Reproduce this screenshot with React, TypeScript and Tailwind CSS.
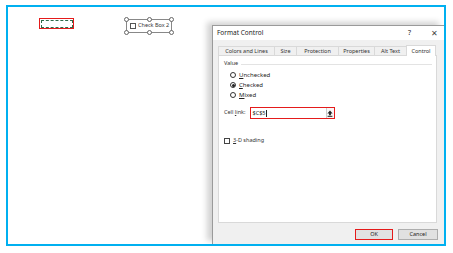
const font = { fontFamily: '"Noto Sans", "Open Sans", sans-serif' };

function Radio({ checked, label, hot }: { checked?: boolean; label: string; hot: string }) {
  return (
    <div className="flex items-center gap-[3px] h-[10px]">
      <div className="w-[6px] h-[6px] rounded-full border border-[#333] bg-white flex items-center justify-center">
        {checked && <div className="w-[3px] h-[3px] rounded-full bg-[#222]" />}
      </div>
      <span className="text-[6px] text-[#222] leading-none">
        <span className="underline">{hot}</span>
        {label.slice(1)}
      </span>
    </div>
  );
}

export default function App() {
  const tabs = [
    { label: 'Colors and Lines', w: 'w-[56px]' },
    { label: 'Size', w: 'w-[22px]' },
    { label: 'Protection', w: 'w-[42px]' },
    { label: 'Properties', w: 'w-[36px]' },
    { label: 'Alt Text', w: 'w-[32px]' },
  ];

  return (
    <div className="w-[453px] h-[253px] bg-white pt-[5px] pl-[6px]" style={font}>
      <div className="w-[440px] h-[241px] border-2 border-[#00b0f0] relative overflow-hidden bg-white">
        {/* selected cell */}
        <div className="absolute left-[31px] top-[11px] w-[35px] h-[11px] border-[1.5px] border-[#e41b1b] p-[0.5px]">
          <div className="w-full h-full border border-dashed border-[#2e6b4a]" />
        </div>

        {/* checkbox form control with handles */}
        <div className="absolute left-[118px] top-[12px] w-[46px] h-[14px] border border-[#888]">
          <div className="flex items-center h-full pl-[3px] gap-[2px]">
            <div className="w-[6px] h-[6px] border border-[#555] bg-white" />
            <span className="text-[5.5px] text-[#333] leading-none whitespace-nowrap">Check Box 2</span>
          </div>
          {[
            'left-[-3px] top-[-3px]',
            'left-[20px] top-[-3px]',
            'right-[-3px] top-[-3px]',
            'left-[-3px] bottom-[-3px]',
            'left-[20px] bottom-[-3px]',
            'right-[-3px] bottom-[-3px]',
          ].map((pos) => (
            <div key={pos} className={`absolute ${pos} w-[5px] h-[5px] rounded-full border border-[#666] bg-white`} />
          ))}
        </div>

        {/* dialog */}
        <div className="absolute left-[204px] top-[18px] right-0 bottom-0 bg-[#f0f0f0] border-l border-t border-[#9a9a9a] shadow-[-5px_-3px_6px_rgba(0,0,0,0.18)] flex flex-col">
          <div className="h-[14px] bg-white flex items-center pl-[4px] pr-[6px] text-[6.5px] text-[#222]">
            <span className="flex-1">Format Control</span>
            <span className="mr-[20px] text-[7px]">?</span>
            <span className="text-[8px] text-[#444]">✕</span>
          </div>

          <div className="pl-[5px] pt-[5px] flex items-end">
            {tabs.map((t) => (
              <div
                key={t.label}
                className={`${t.w} h-[9px] flex items-center justify-center border-t border-l border-[#d9d9d9] text-[5.5px] text-[#333] whitespace-nowrap`}
              >
                {t.label}
              </div>
            ))}
            <div className="w-[30px] h-[11px] flex items-center justify-center bg-white border-t border-l border-r border-[#d9d9d9] text-[5.5px] text-[#333] -mb-px relative z-10">
              Control
            </div>
          </div>

          <div className="ml-[5px] w-[219px] h-[168px] bg-white border border-[#d9d9d9] pl-[5px] pt-[4px]">
            <div className="flex items-center gap-[3px] h-[8px] pr-[4px]">
              <span className="text-[5.5px] text-[#333] leading-none">Value</span>
              <div className="flex-1 h-px bg-[#e3e3e3]" />
            </div>
            <div className="pl-[6px] mt-[2px] flex flex-col">
              <Radio label="Unchecked" hot="U" />
              <Radio label="Checked" hot="C" checked />
              <Radio label="Mixed" hot="M" />
            </div>
            <div className="flex items-center gap-[4px] mt-[7px] h-[12px]">
              <span className="text-[5.5px] text-[#333] leading-none">
                Cell <span className="underline">l</span>ink:
              </span>
              <div className="w-[85px] h-[12px] border-[1.5px] border-[#e41b1b] flex items-center bg-white">
                <div className="flex-1 h-full flex items-center pl-[2px] text-[5.5px] text-[#222]">
                  $C$5<span className="w-px h-[7px] bg-[#222] ml-px" />
                </div>
                <div className="w-[8px] h-full flex items-center justify-center border-l border-[#ccc] bg-[#f7f7f7]">
                  <svg width="6" height="7" viewBox="0 0 6 7">
                    <path d="M3 0.5 L5.6 3.4 H3.9 V5.2 H2.1 V3.4 H0.4 Z" fill="#222" />
                    <rect x="0.6" y="5.8" width="4.8" height="1" fill="#222" />
                  </svg>
                </div>
              </div>
            </div>
            <div className="flex items-center gap-[3px] mt-[18px] h-[8px]">
              <div className="w-[6px] h-[6px] border border-[#444] bg-white" />
              <span className="text-[5.5px] text-[#333] leading-none">
                <span className="underline">3</span>-D shading
              </span>
            </div>
          </div>

          <div className="flex gap-[5px] mt-[6px] pl-[142px]">
            <div className="w-[38px] h-[11px] border-[1.5px] border-[#e41b1b] bg-[#e1e1e1] flex items-center justify-center text-[5.5px] text-[#222]">
              OK
            </div>
            <div className="w-[40px] h-[11px] border border-[#adadad] bg-[#e1e1e1] flex items-center justify-center text-[5.5px] text-[#222]">
              Cancel
            </div>
          </div>
        </div>
      </div>
    </div>
  );
}
